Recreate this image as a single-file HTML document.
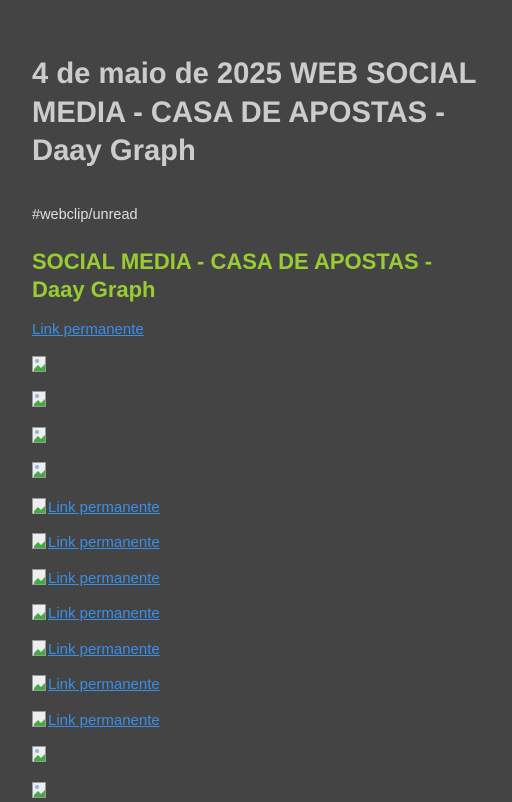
<!DOCTYPE html>
<html><head><style>
body{margin:0;background:#444;font-family:"Liberation Sans",sans-serif;color:#ddd;width:512px;height:800px;overflow:hidden}
.w{padding:32px 32px 0 32px}
h1{font-size:29.2px;line-height:38.5px;margin:23px 0 34px;color:#ccc;font-weight:bold;white-space:nowrap}
.tag{font-size:14.5px;margin:0 0 23px;color:#ddd}
h2{font-size:22px;line-height:28px;color:#9c3;margin:0 0 16px}
p{margin:0 0 15px;font-size:15px;line-height:20.5px;height:20.5px}
a{color:#3a8ee6;text-decoration:underline}
svg{vertical-align:-2px}
</style></head><body><div class="w">
<h1>4 de maio de 2025 WEB SOCIAL<br>MEDIA - CASA DE APOSTAS -<br>Daay Graph</h1>
<p class="tag">#webclip/unread</p>
<h2>SOCIAL MEDIA - CASA DE APOSTAS - Daay Graph</h2>
<p><a>Link permanente</a></p>
<p><svg width="16" height="16"><rect x=".5" y=".5" width="13" height="15" fill="#eee" stroke="#999"/><path d="M2 13 L6 9 L9 12 L13 8 V15 H2Z" fill="#4a4"/><circle cx="5" cy="5" r="2" fill="#8bd"/></svg></p>
<p><svg width="16" height="16"><rect x=".5" y=".5" width="13" height="15" fill="#eee" stroke="#999"/><path d="M2 13 L6 9 L9 12 L13 8 V15 H2Z" fill="#4a4"/><circle cx="5" cy="5" r="2" fill="#8bd"/></svg></p>
<p><svg width="16" height="16"><rect x=".5" y=".5" width="13" height="15" fill="#eee" stroke="#999"/><path d="M2 13 L6 9 L9 12 L13 8 V15 H2Z" fill="#4a4"/><circle cx="5" cy="5" r="2" fill="#8bd"/></svg></p>
<p><svg width="16" height="16"><rect x=".5" y=".5" width="13" height="15" fill="#eee" stroke="#999"/><path d="M2 13 L6 9 L9 12 L13 8 V15 H2Z" fill="#4a4"/><circle cx="5" cy="5" r="2" fill="#8bd"/></svg></p>
<p><a><svg width="16" height="16"><rect x=".5" y=".5" width="13" height="15" fill="#eee" stroke="#999"/><path d="M2 13 L6 9 L9 12 L13 8 V15 H2Z" fill="#4a4"/></svg>Link permanente</a></p>
<p><a><svg width="16" height="16"><rect x=".5" y=".5" width="13" height="15" fill="#eee" stroke="#999"/><path d="M2 13 L6 9 L9 12 L13 8 V15 H2Z" fill="#4a4"/></svg>Link permanente</a></p>
<p><a><svg width="16" height="16"><rect x=".5" y=".5" width="13" height="15" fill="#eee" stroke="#999"/><path d="M2 13 L6 9 L9 12 L13 8 V15 H2Z" fill="#4a4"/></svg>Link permanente</a></p>
<p><a><svg width="16" height="16"><rect x=".5" y=".5" width="13" height="15" fill="#eee" stroke="#999"/><path d="M2 13 L6 9 L9 12 L13 8 V15 H2Z" fill="#4a4"/></svg>Link permanente</a></p>
<p><a><svg width="16" height="16"><rect x=".5" y=".5" width="13" height="15" fill="#eee" stroke="#999"/><path d="M2 13 L6 9 L9 12 L13 8 V15 H2Z" fill="#4a4"/></svg>Link permanente</a></p>
<p><a><svg width="16" height="16"><rect x=".5" y=".5" width="13" height="15" fill="#eee" stroke="#999"/><path d="M2 13 L6 9 L9 12 L13 8 V15 H2Z" fill="#4a4"/></svg>Link permanente</a></p>
<p><a><svg width="16" height="16"><rect x=".5" y=".5" width="13" height="15" fill="#eee" stroke="#999"/><path d="M2 13 L6 9 L9 12 L13 8 V15 H2Z" fill="#4a4"/></svg>Link permanente</a></p>
<p><svg width="16" height="16"><rect x=".5" y=".5" width="13" height="15" fill="#eee" stroke="#999"/><path d="M2 13 L6 9 L9 12 L13 8 V15 H2Z" fill="#4a4"/><circle cx="5" cy="5" r="2" fill="#8bd"/></svg></p>
<p><svg width="16" height="16"><rect x=".5" y=".5" width="13" height="15" fill="#eee" stroke="#999"/><path d="M2 13 L6 9 L9 12 L13 8 V15 H2Z" fill="#4a4"/><circle cx="5" cy="5" r="2" fill="#8bd"/></svg></p>
</div></body></html>
